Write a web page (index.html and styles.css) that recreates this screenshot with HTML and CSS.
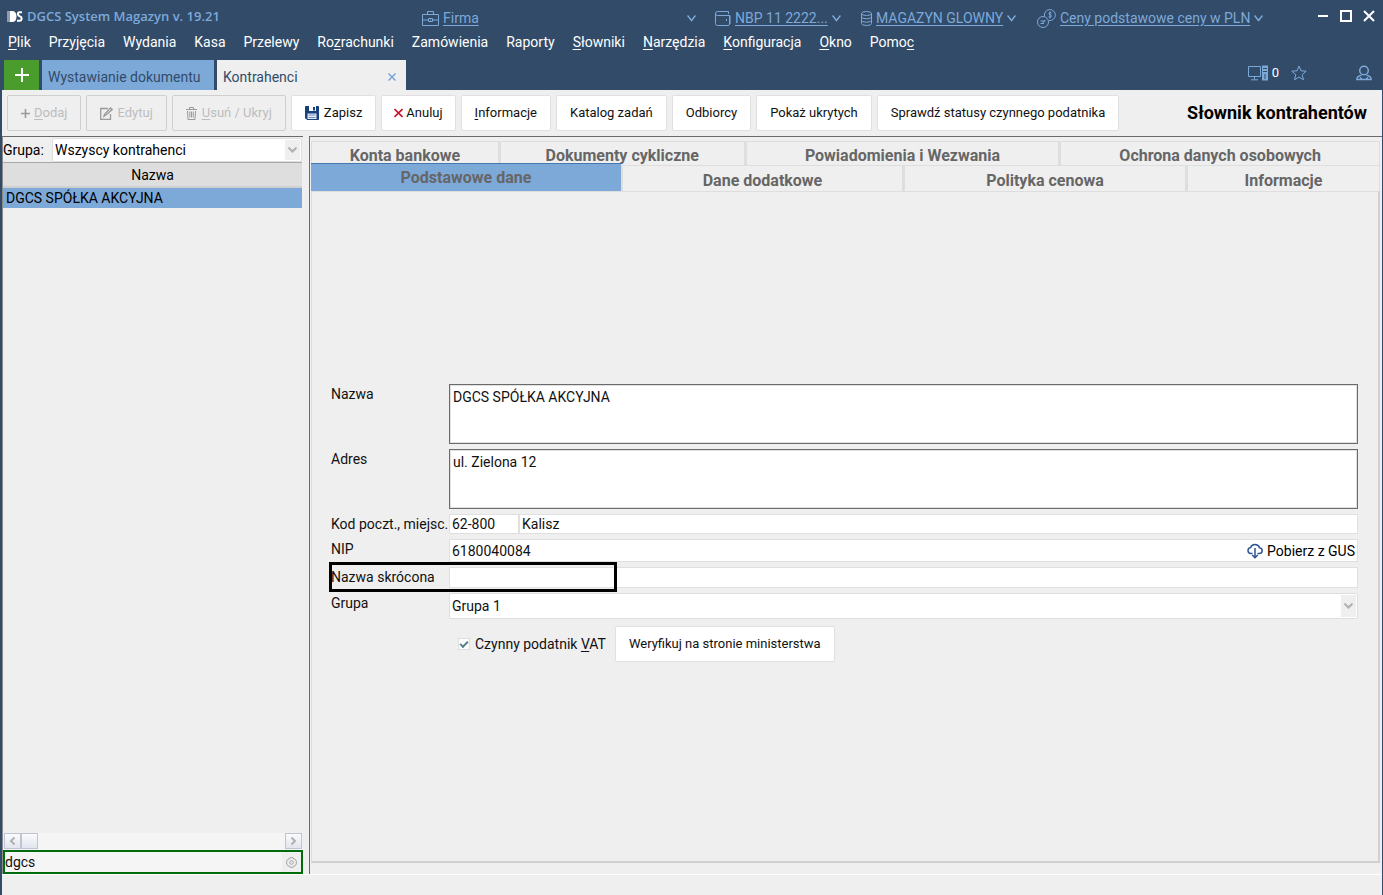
FILE: index.html
```
<!DOCTYPE html>
<html lang="pl">
<head>
<meta charset="utf-8">
<title>DGCS System Magazyn</title>
<link rel="stylesheet" href="styles.css">
</head>
<body>
<header class="titlebar">
  <div class="brand">
    <svg class="logo" width="16" height="13" viewBox="0 0 16 13"><path d="M0 1h3v11H0z" fill="#8d9cae"/><path d="M3 1h2q4.500 0 4.500 5.500T5 12H3z" fill="#fff"/><path d="M15 2.300h-2.500q-1.600 0-1.600 1.700t1.800 2.200q2 .500 2 2.300t-1.800 2.200H10" fill="none" stroke="#fff" stroke-width="2"/></svg>
    <span>DGCS System Magazyn v. 19.21</span>
  </div>
  <div class="context context-wide">
    <svg width="17" height="15" viewBox="0 0 17 15" class="line"><path d="M.5 3.500h16v11H.5zM5.500 3.500v-3h6v3M.5 9h6m4 0h6M6.500 7.500h4v3h-4z"/><path d="M8 9h1"/></svg>
    <a href="#">Firma</a>
    <svg width="9" height="7" viewBox="0 0 9 7" class="line chev"><path d="M.5.500l4 5 4-5"/></svg>
  </div>
  <div class="context">
    <svg width="16" height="15" viewBox="0 0 16 15" class="line"><path d="M14.500 4.500v8.500q0 1.500-1.500 1.500H2.500Q.5 14.500.5 12.500V2.500Q.5.500 2.500.500h11v2.500M.5 2.500q0 2 2 2h12.500V13"/><path d="M11.500 8v2"/></svg>
    <a href="#">NBP 11 2222...</a>
    <svg width="9" height="7" viewBox="0 0 9 7" class="line chev"><path d="M.5.500l4 5 4-5"/></svg>
  </div>
  <div class="context">
    <svg width="11" height="15" viewBox="0 0 11 15" class="line"><ellipse cx="5.500" cy="2.500" rx="5" ry="2"/><path d="M.5 2.500v10q0 2 5 2t5-2v-10M.5 5.800q0 2 5 2t5-2M.5 9.200q0 2 5 2t5-2"/></svg>
    <a href="#">MAGAZYN GLOWNY</a>
    <svg width="9" height="7" viewBox="0 0 9 7" class="line chev"><path d="M.5.500l4 5 4-5"/></svg>
  </div>
  <div class="context">
    <svg width="19" height="19" viewBox="0 0 19 19" class="line"><circle cx="6" cy="13" r="5.500"/><path d="M7.500 7.300A5.500 5.500 0 1 1 12 11.500M3.500 12h5m-5 2.500h3.500m1-3.500l-3 4M14.500 4q-2-1.500-2.500 0t1.300 1.800T14 8q-1 1-2.500-.3M13 2.500v7"/></svg>
    <a href="#">Ceny podstawowe ceny w PLN</a>
    <svg width="9" height="7" viewBox="0 0 9 7" class="line chev"><path d="M.5.500l4 5 4-5"/></svg>
  </div>
  <div class="window-buttons">
    <button type="button" aria-label="Minimalizuj"><svg width="12" height="12" viewBox="0 0 12 12"><path d="M1 6h10" stroke="#fff" stroke-width="2"/></svg></button>
    <button type="button" aria-label="Maksymalizuj"><svg width="12" height="12" viewBox="0 0 12 12"><path d="M1 1h10v10H1z" fill="none" stroke="#fff" stroke-width="2"/></svg></button>
    <button type="button" aria-label="Zamknij"><svg width="12" height="12" viewBox="0 0 12 12"><path d="M1 1l10 10M11 1L1 11" stroke="#fff" stroke-width="2"/></svg></button>
  </div>
</header>

<nav class="menu">
  <a href="#"><u>P</u>lik</a><a href="#">Przyjęcia</a><a href="#">Wydania</a><a href="#">Kasa</a><a href="#">Przelewy</a><a href="#">Ro<u>z</u>rachunki</a><a href="#">Zamówienia</a><a href="#">Raporty</a><a href="#"><u>S</u>łowniki</a><a href="#"><u>N</u>arzędzia</a><a href="#"><u>K</u>onfiguracja</a><a href="#"><u>O</u>kno</a><a href="#">Pomo<u>c</u></a>
</nav>

<div class="docbar">
  <button type="button" class="doc-new" aria-label="Nowa karta"><svg width="14" height="14" viewBox="0 0 14 14"><path d="M7 0v14M0 7h14" stroke="#fff" stroke-width="2"/></svg></button>
  <button type="button" class="doc-tab">Wystawianie dokumentu</button>
  <button type="button" class="doc-tab doc-current"><span>Kontrahenci</span><svg width="8" height="8" viewBox="0 0 8 8"><path d="M.5.500l7 7M7.500.500l-7 7" stroke="#6fa0d4" stroke-width="1.400"/></svg></button>
  <div class="tray">
    <svg width="20" height="16" viewBox="0 0 20 16" class="line"><path d="M.5 1.500h12v10H.5zM6.500 11.500v3M3 14.800h7"/><path d="M14 .5h6v15h-6z" fill="#7da9d9" stroke="none"/><path d="M15 3.500h4M15 6.500h4M17 9v5" stroke="#314b69"/></svg>
    <span class="tray-count">0</span>
    <svg class="star line" width="16" height="16" viewBox="0 0 16 16"><path d="M8 1l2 4.800 5.200.400-4 3.400 1.300 5.200L8 12l-4.500 2.800 1.300-5.200-4-3.400L6 5.800z"/></svg>
    <svg class="line" width="16" height="16" viewBox="0 0 16 16"><circle cx="8" cy="5.500" r="4.300" stroke-width="1.500"/><path d="M5.500 10.200Q1 11 .8 14.500h14.400Q15 11 10.500 10.200M4 12.500l2 1.500m6-1.500L10 14" stroke-width="1.400"/></svg>
  </div>
</div>

<div class="toolbar">
  <button type="button" class="btn" disabled><svg width="9" height="9" viewBox="0 0 9 9"><path d="M4.500 0v9M0 4.500h9" stroke="#9a9a9a" stroke-width="1.600"/></svg><span><u>D</u>odaj</span></button>
  <button type="button" class="btn" disabled><svg width="13" height="13" viewBox="0 0 13 13" fill="none" stroke="#9a9a9a" stroke-width="1.300"><path d="M8 1.500H.7v10.800h9.800V7"/><path d="M5 8.500l-1 .800.500-2L10.500 1l1.700 1.500L6 8z"/></svg><span>Edytuj</span></button>
  <button type="button" class="btn" disabled><svg width="12" height="13" viewBox="0 0 12 13" fill="none" stroke="#9a9a9a"><path d="M0 2.500h11M3.500 2.500v-2h4v2M1.500 4l.5 8.500h7L9.500 4M3.800 4.500v6M5.500 4.500v6M7.200 4.500v6"/></svg><span><u>U</u>suń / Ukryj</span></button>
  <button type="button" class="btn"><svg width="15" height="14" viewBox="0 0 15 14"><path d="M.5.500h13v13H2L.5 12z" fill="#173f7d" stroke="#173f7d"/><path d="M4 0h7v5H4z" fill="#fff"/><path d="M8 1h2v3.500H8z" fill="#173f7d"/><path d="M2.500 7.500h9V13h-9z" fill="#e4ebf5"/><path d="M3.500 9h7M3.500 11.500h7" stroke="#6e8fbd"/></svg><span>Zapisz</span></button>
  <button type="button" class="btn btn-tight"><svg width="9" height="10" viewBox="0 0 9 10"><path d="M.5 1l8 8M8.500 1l-8 8" stroke="#c8102e" stroke-width="1.600"/></svg><span>Anuluj</span></button>
  <button type="button" class="btn"><span><u>I</u>nformacje</span></button>
  <button type="button" class="btn">Katalog zadań</button>
  <button type="button" class="btn">Odbiorcy</button>
  <button type="button" class="btn">Pokaż ukrytych</button>
  <button type="button" class="btn">Sprawdź statusy czynnego podatnika</button>
  <h1>Słownik kontrahentów</h1>
</div>

<main class="workspace">
  <aside class="sidebar">
    <div class="filter">
      <label for="group-filter">Grupa:</label>
      <div class="combo">
        <select id="group-filter"><option>Wszyscy kontrahenci</option></select>
        <span class="combo-arrow"><svg width="9" height="6" viewBox="0 0 9 6"><path d="M.5.500l4 4 4-4" fill="none" stroke="#b0b0b0" stroke-width="2"/></svg></span>
      </div>
    </div>
    <div class="list">
      <table>
        <thead><tr><th scope="col">Nazwa</th></tr></thead>
        <tbody><tr><td>DGCS SPÓŁKA AKCYJNA</td></tr></tbody>
      </table>
    </div>
    <div class="scroll">
      <button type="button" aria-label="W lewo"><svg width="7" height="8" viewBox="0 0 7 8"><path d="M5.500.500L2 4l3.500 3.500" fill="none" stroke="#b0b0b0" stroke-width="2"/></svg></button>
      <span class="thumb"></span>
      <button type="button" class="scroll-end" aria-label="W prawo"><svg width="7" height="8" viewBox="0 0 7 8"><path d="M1.500.500L5 4 1.500 7.500" fill="none" stroke="#b0b0b0" stroke-width="2"/></svg></button>
    </div>
    <div class="search">
      <input type="text" value="dgcs" aria-label="Szukaj">
      <button type="button" aria-label="Opcje wyszukiwania"><svg width="11" height="11" viewBox="0 0 11 11" fill="none" stroke="#a3a3a3"><path d="M4 .7h3l.600 1.200 1.500.300L10.300 4v3l-1.200 1.800-1.500.300L7 10.300H4l-.6-1.200-1.500-.3L.7 7V4l1.200-1.800 1.500-.3z"/><circle cx="5.500" cy="5.500" r="1.800"/></svg></button>
    </div>
  </aside>

  <section class="details">
    <div class="tabs tabs-back">
      <button type="button" class="tab">Konta bankowe</button>
      <button type="button" class="tab">Dokumenty cykliczne</button>
      <button type="button" class="tab">Powiadomienia i Wezwania</button>
      <button type="button" class="tab">Ochrona danych osobowych</button>
    </div>
    <div class="tabs tabs-front">
      <button type="button" class="tab tab-active">Podstawowe dane</button>
      <button type="button" class="tab">Dane dodatkowe</button>
      <button type="button" class="tab">Polityka cenowa</button>
      <button type="button" class="tab">Informacje</button>
    </div>
    <div class="pane">
      <form class="form">
        <label for="name">Nazwa</label>
        <textarea id="name">DGCS SPÓŁKA AKCYJNA</textarea>
        <label for="address">Adres</label>
        <textarea id="address">ul. Zielona 12</textarea>
        <label for="zip">Kod poczt., miejsc.</label>
        <div class="place">
          <input id="zip" class="field" type="text" value="62-800">
          <input class="field" type="text" value="Kalisz" aria-label="Miejscowość">
        </div>
        <label for="nip">NIP</label>
        <div class="field lookup">
          <input id="nip" type="text" value="6180040084">
          <button type="button"><svg width="16" height="16" viewBox="0 0 16 16" fill="none" stroke="#2f5596" stroke-width="1.500"><path d="M5.500 10.500H4Q1 10.500 1 7.500 1 5 3.600 4.600 4.500 1.500 8 1.500t4.500 3.200q2.700.500 2.700 3t-2.800 2.800h-2M8 5v9.500M5.200 12L8 14.800 10.800 12"/></svg>Pobierz z GUS</button>
        </div>
        <label for="short" class="marked">Nazwa skrócona</label>
        <input id="short" class="field short" type="text">
        <label for="group">Grupa</label>
        <div class="combo combo-form">
          <select id="group"><option>Grupa 1</option></select>
          <span class="combo-arrow"><svg width="9" height="6" viewBox="0 0 9 6"><path d="M.5.500l4 4 4-4" fill="none" stroke="#b0b0b0" stroke-width="2"/></svg></span>
        </div>
        <div class="vat">
          <input id="vat" type="checkbox" checked>
          <label for="vat">Czynny podatnik <u>V</u>AT</label>
          <button type="button" class="btn">Weryfikuj na stronie ministerstwa</button>
        </div>
      </form>
    </div>
  </section>
</main>
<footer class="status"></footer>
</body>
</html>
```
FILE: styles.css
```
*, *::before, *::after { box-sizing: border-box; }

body {
  margin: 0;
  min-height: 100vh;
  display: flex;
  flex-direction: column;
  padding: 0 1px 0 2px;
  background: #314b69;
  color: #111;
  font: 14px/20px Roboto, "Noto Sans", sans-serif;
}

button, input, select, textarea {
  margin: 0;
  padding: 0;
  border: 0;
  border-radius: 0;
  background: none;
  color: inherit;
  font: inherit;
}

svg { display: block; flex: none; }
u { text-underline-offset: 2px; }

.line { fill: none; stroke: #7da9d9; }

/* Title bar */
.titlebar {
  display: grid;
  grid-template-columns: 420px 1fr 146px 176px 280px 65px;
  align-items: center;
  height: 32px;
}
.brand {
  display: flex;
  align-items: center;
  gap: 4px;
  padding-left: 5px;
  color: #7da9d9;
  font: 600 13px/20px "Open Sans", sans-serif;
}
.context { display: flex; align-items: center; gap: 4px; padding-top: 4px; }
.context a { color: #7da9d9; text-underline-offset: 2px; white-space: nowrap; }
.context-wide { padding-right: 19px; }
.context-wide .chev { margin-left: auto; }
.chev { stroke-width: 1.500; }
.window-buttons { display: flex; gap: 11px; }
.window-buttons button { width: 12px; height: 12px; }

/* Menu */
.menu { display: flex; gap: 18px; height: 28px; padding-left: 6px; }
.menu a { color: #fff; text-decoration: none; }

/* Open documents */
.docbar { display: flex; height: 30px; padding-left: 2px; }
.doc-new { display: flex; align-items: center; justify-content: center; width: 35px; margin-right: 3px; background: #4a9c2d; }
.doc-tab { width: 172px; margin-right: 3px; padding: 4px 6px 0; background: #7da9d9; color: #314b69; text-align: left; white-space: nowrap; }
.doc-current { display: flex; align-items: center; justify-content: space-between; width: 189px; padding-right: 10px; background: #efefef; }
.tray { display: flex; align-items: center; margin-left: auto; padding: 0 10px 4px 0; }
.tray-count { margin: 0 12px 0 4px; color: #fff; font-size: 13px; }
.star { margin-right: 49px; }

/* Toolbar */
.toolbar { display: flex; gap: 5px; align-items: center; padding: 5px 15px 5px 5px; background: #efefef; }
.toolbar h1 { margin: 0 0 0 auto; color: #000; font-size: 18px; font-weight: 700; line-height: 20px; white-space: nowrap; }
.btn {
  display: flex;
  align-items: center;
  justify-content: center;
  gap: 4px;
  height: 36px;
  padding: 0 13px;
  border: 1px solid #e0e0e0;
  border-radius: 2px;
  background: #fff;
  font-size: 13px;
  white-space: nowrap;
}
.btn:disabled { border-color: #cfcfcf; background: #efefef; color: #bdbdbd; }
.btn-tight { gap: 3px; padding: 0 12px; }

/* Workspace */
.workspace { flex: 1; display: grid; grid-template-columns: 301px 1fr; gap: 6px; background: #efefef; border-bottom: 1px solid #fff; }

.sidebar { display: flex; flex-direction: column; border-top: 1px solid #6b6b6b; border-left: 1px solid #8a8a8a; }
.filter { display: flex; align-items: center; justify-content: space-between; height: 25px; margin-right: 1px; color: #000; }
.combo { position: relative; width: 250px; height: 24px; border: 1px solid #dedede; border-radius: 2px; background: #fff; }
.combo select { appearance: none; width: 100%; height: 100%; padding-left: 2px; }
.combo-arrow {
  position: absolute;
  top: 1px;
  right: 1px;
  bottom: 1px;
  display: flex;
  align-items: center;
  justify-content: center;
  width: 15px;
  background: #efefef;
  pointer-events: none;
}
.list { flex: 1; margin-right: 1px; border-top: 1px solid #a8a8a8; }
.list table { width: 100%; border-collapse: collapse; color: #000; }
.list th { height: 24px; padding: 0; border-bottom: 2px solid #cfcfcf; background: #dedede; font-weight: 400; }
.list td { height: 20px; padding: 0 3px; background: #7da9d9; }
.scroll { display: flex; height: 17px; margin: 0 1px; background: #f5f5f5; }
.scroll button, .thumb {
  display: flex;
  align-items: center;
  justify-content: center;
  width: 17px;
  height: 16px;
  border: 1px solid #c0c3d4;
  background: linear-gradient(#fbfbfd, #e2e5ee);
}
.scroll .scroll-end { margin-left: auto; }
.search { display: flex; height: 24px; border: 2px solid #006c0c; background: #f5f5f5; }
.search input { flex: 1; min-width: 0; }
.search button { display: flex; align-items: center; justify-content: center; width: 19px; background: #efefef; }

/* Details */
.details { display: flex; flex-direction: column; padding: 4px 2px 11px 1px; border-top: 1px solid #6b6b6b; border-left: 1px solid #6b6b6b; }
.tabs { display: grid; }
.tabs-back { grid-template-columns: 188fr 246fr 315fr 321fr; height: 24px; }
.tabs-front { grid-template-columns: 310fr 282fr 283fr 194fr; height: 26px; }
.tab { padding: 4px 0 0; border: 1px solid #dedede; border-bottom: 0; color: #666; font-size: 16px; font-weight: 700; white-space: nowrap; }
.tabs .tab + .tab { border-left-width: 2px; }
.tab-active { margin-top: -2px; padding: 0; border: 0; border-top: 1px solid #4678ad; background: #7da9d9; }
.pane {
  flex: 1;
  display: flex;
  flex-direction: column;
  justify-content: center;
  padding: 0 20px 8px 19px;
  border: solid #dedede;
  border-width: 1px 2px 2px 1px;
  border-right-color: #d0d0d0;
  border-bottom-color: #d0d0d0;
}

/* Form */
.form { display: grid; grid-template-columns: 118px 1fr; gap: 5px 0; align-items: start; }
.form label { white-space: nowrap; }
.form textarea { display: block; width: 100%; height: 60px; padding: 2px 3px; border: 1px solid #6b6b6b; background: #fff; box-shadow: inset 0 0 0 1px #e0e0e0; resize: none; }
.field { width: 100%; height: 20px; padding: 1px 2px 0; border: 1px solid #e0e0e0; background: #fff; }
.place { display: grid; grid-template-columns: 70px 1fr; }
.lookup { display: flex; height: 23px; }
.lookup input { flex: 1; min-width: 0; }
.lookup button { display: flex; align-items: center; gap: 4px; color: #000; }
.short { height: 21px; }
.combo-form { width: 100%; height: 26px; }
.marked { position: relative; z-index: 1; }
.marked::after { content: ""; position: absolute; top: -5px; left: -2px; width: 288px; height: 30px; border: 3px solid #000; pointer-events: none; }
.vat { grid-column: 2; display: flex; align-items: center; gap: 5px; padding: 2px 0 0 9px; }
.vat .btn { margin-left: 4px; }
.vat input { appearance: none; width: 12px; height: 12px; border: 1px solid #dedede; background: #fff; }
.vat input:checked::before { content: ""; display: block; width: 8px; height: 5px; margin: 2px 0 0 1px; border: solid #4f7f8c; border-width: 0 0 2px 2px; transform: rotate(-45deg); }

.status { height: 20px; background: #efefef; }
```
